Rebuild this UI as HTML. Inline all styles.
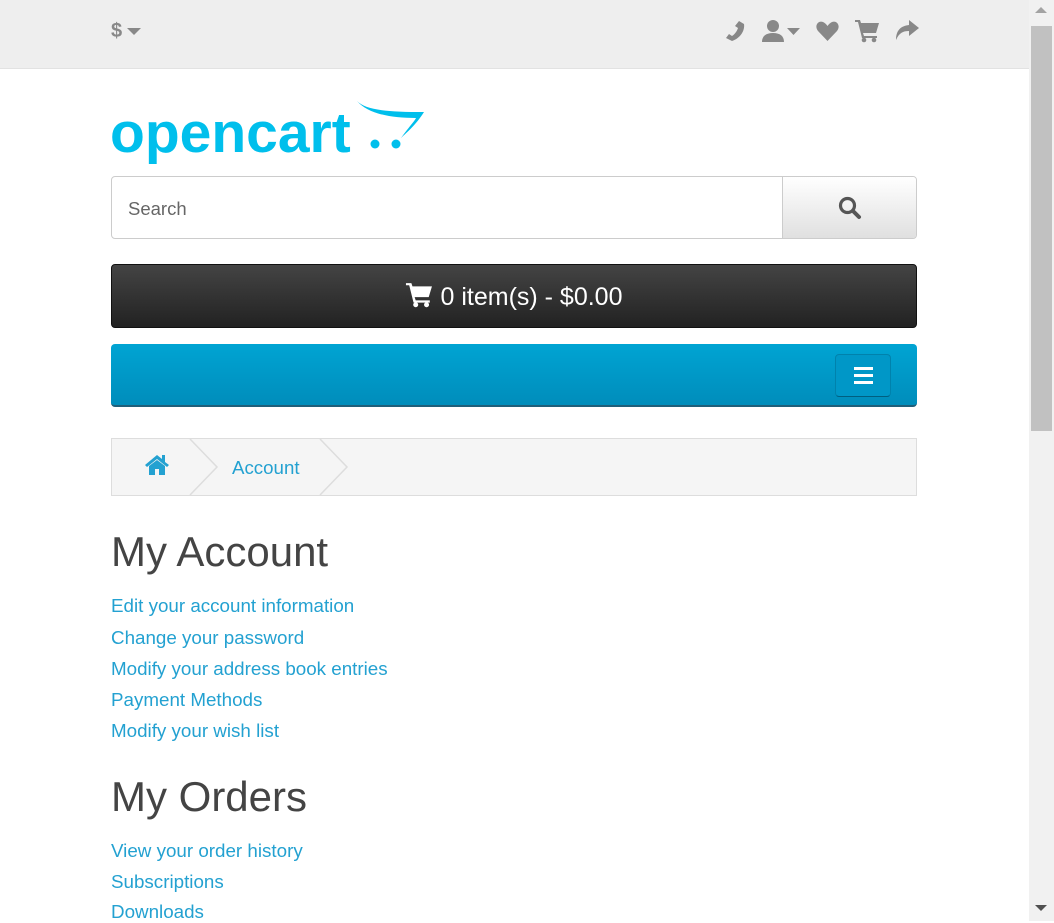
<!DOCTYPE html>
<html><head><meta charset="utf-8"><style>
*{box-sizing:border-box;margin:0;padding:0}
body{width:1054px;height:921px;overflow:hidden;font-family:"Liberation Sans",sans-serif;background:#fff;position:relative;color:#444}
.top{position:absolute;left:0;top:0;width:1029px;height:69px;background:#eee;border-bottom:1px solid #e2e2e2}
.ic{position:absolute;fill:#888}
.sb{position:absolute;left:1029px;top:0;width:25px;height:921px;background:#f1f1f1}
.thumb{position:absolute;left:1031px;top:26px;width:21px;height:405px;background:#c1c1c1}
.logo{position:absolute;left:110px;top:100px;font-size:57px;font-weight:bold;color:#00bfec;font-family:"Liberation Sans",sans-serif}
.search{position:absolute;left:111px;top:176px;width:806px;height:63px;border:1px solid #ccc;border-radius:4px;overflow:hidden}
.search span{position:absolute;left:16px;top:21px;font-size:18.5px;color:#666}
.search .btn{position:absolute;right:0;top:0;width:134px;height:61px;border-left:1px solid #ccc;background:linear-gradient(#fff,#e0e0e0)}
.cart{position:absolute;left:111px;top:264px;width:806px;height:64px;border-radius:4px;background:linear-gradient(#444,#222);border:1px solid #111;color:#fff;font-size:25px;text-align:center;line-height:64px}
.menu{position:absolute;left:111px;top:344px;width:806px;height:63px;border-radius:4px;background:linear-gradient(#00a4d3,#008dbb);border-bottom:2px solid #1f5f7a}
.mb{position:absolute;right:26px;top:10px;width:56px;height:43px;border-radius:4px;background:#0097c7;border:1px solid #0082ac;border-bottom-color:#005f80}
.bc{position:absolute;left:111px;top:438px;width:806px;height:58px;background:#f5f5f5;border:1px solid #ddd}
h1{position:absolute;left:111px;font-weight:normal;font-size:42px;color:#444}
.links a{position:absolute;left:111px;font-size:18.8px;color:#23a1d1;text-decoration:none}
</style></head><body>
<div class="top">
<div style="position:absolute;left:111px;top:20px;font-size:20px;color:#888;font-weight:bold">$</div>
<svg class="ic" style="left:127px;top:28px" width="14" height="8"><path d="M0 0H14L7 7z"/></svg>
<svg class="ic" style="left:724px;top:20px" width="22" height="22" viewBox="0 0 22 22"><path d="M15 1l5 3c1 6-3 14-12 17l-6-3 3-4 3 2c3-2 5-5 6-8l-3-2z"/></svg>
<svg class="ic" style="left:762px;top:19px" width="22" height="24" viewBox="0 0 22 24"><circle cx="11" cy="7" r="6"/><path d="M0 23c0-6 4-9 11-9s11 3 11 9z"/></svg>
<svg class="ic" style="left:787px;top:28px" width="13" height="8"><path d="M0 0H13L6.5 7z"/></svg>
<svg class="ic" style="left:816px;top:21px" width="23" height="20" viewBox="0 0 23 20"><path d="M11.5 20L2 10C-2 5 2-1 7 1c2 1 3 2 4.5 4C13 3 14 2 16 1c5-2 9 4 5 9z"/></svg>
<svg class="ic" style="left:855px;top:19px" width="25" height="24" viewBox="0 0 25 24"><path d="M0 1h5l1 3h18l-3 10H8l1 3h13v2H7L3 3H0z"/><circle cx="9" cy="21" r="2.3"/><circle cx="19" cy="21" r="2.3"/></svg>
<svg class="ic" style="left:895px;top:20px" width="24" height="22" viewBox="0 0 24 22"><path d="M14 0l10 8-10 8v-5C8 11 4 13 1 20 1 10 6 6 14 5z"/></svg>
</div>
<div class="sb"></div><div class="thumb"></div>
<svg style="position:absolute;left:1035px;top:6px" width="12" height="8"><path d="M0 7L6 1 12 7z" fill="#a3a3a3"/></svg>
<svg style="position:absolute;left:1035px;top:904px" width="12" height="8"><path d="M0 1L6 7 12 1z" fill="#505050"/></svg>
<div class="logo">opencart</div>
<svg style="position:absolute;left:356px;top:100px" width="70" height="50" viewBox="0 0 70 50"><path d="M1 1C10 10 30 12 68 12 60 25 50 33 45 38 52 28 58 22 60 18 35 18 12 14 1 1z" fill="#00bfec"/><circle cx="19" cy="44" r="4.5" fill="#00bfec"/><circle cx="40" cy="44" r="4.5" fill="#00bfec"/></svg>
<div class="search"><span>Search</span><div class="btn"><svg style="position:absolute;left:55px;top:19px" width="24" height="24" viewBox="0 0 24 24"><circle cx="9.5" cy="9.5" r="7" fill="none" stroke="#555" stroke-width="3.2"/><path d="M15 15l6 6" stroke="#555" stroke-width="4" stroke-linecap="round"/></svg></div></div>
<div class="cart"><svg style="vertical-align:-3px;margin-right:6px" width="29" height="26" viewBox="0 0 25 24"><path d="M0 1h5l1 3h18l-3 10H8l1 3h13v2H7L3 3H0z" fill="#fff"/><circle cx="9" cy="21" r="2.3" fill="#fff"/><circle cx="19" cy="21" r="2.3" fill="#fff"/></svg>0 item(s) - $0.00</div>
<div class="menu"><div class="mb"><div style="position:absolute;left:18px;top:12px;width:19px;height:3px;background:#fff;box-shadow:0 7px 0 #fff,0 14px 0 #fff"></div></div></div>
<div class="bc">
<svg style="position:absolute;left:32px;top:14px" width="26" height="22" viewBox="0 0 26 22"><path d="M13 2L1 12l2 2 10-8 10 8 2-2-4-3V2h-3v4z" fill="#23a1d1"/><path d="M5 13l8-6 8 6v9h-6v-6h-4v6H5z" fill="#23a1d1"/></svg>
<svg style="position:absolute;left:76px;top:0" width="170" height="56"><path d="M2 0L29 28 2 56M132 0L159 28 132 56" fill="none" stroke="#ddd" stroke-width="1.5"/></svg>
<div style="position:absolute;left:120px;top:18px;font-size:18.7px;color:#23a1d1">Account</div>
</div>
<h1 style="top:528px">My Account</h1>
<div class="links">
<a style="top:595px">Edit your account information</a>
<a style="top:627px">Change your password</a>
<a style="top:658px">Modify your address book entries</a>
<a style="top:689px">Payment Methods</a>
<a style="top:720px">Modify your wish list</a>
</div>
<h1 style="top:773px">My Orders</h1>
<div class="links">
<a style="top:840px">View your order history</a>
<a style="top:871px">Subscriptions</a>
<a style="top:901px">Downloads</a>
</div>
</body></html>
